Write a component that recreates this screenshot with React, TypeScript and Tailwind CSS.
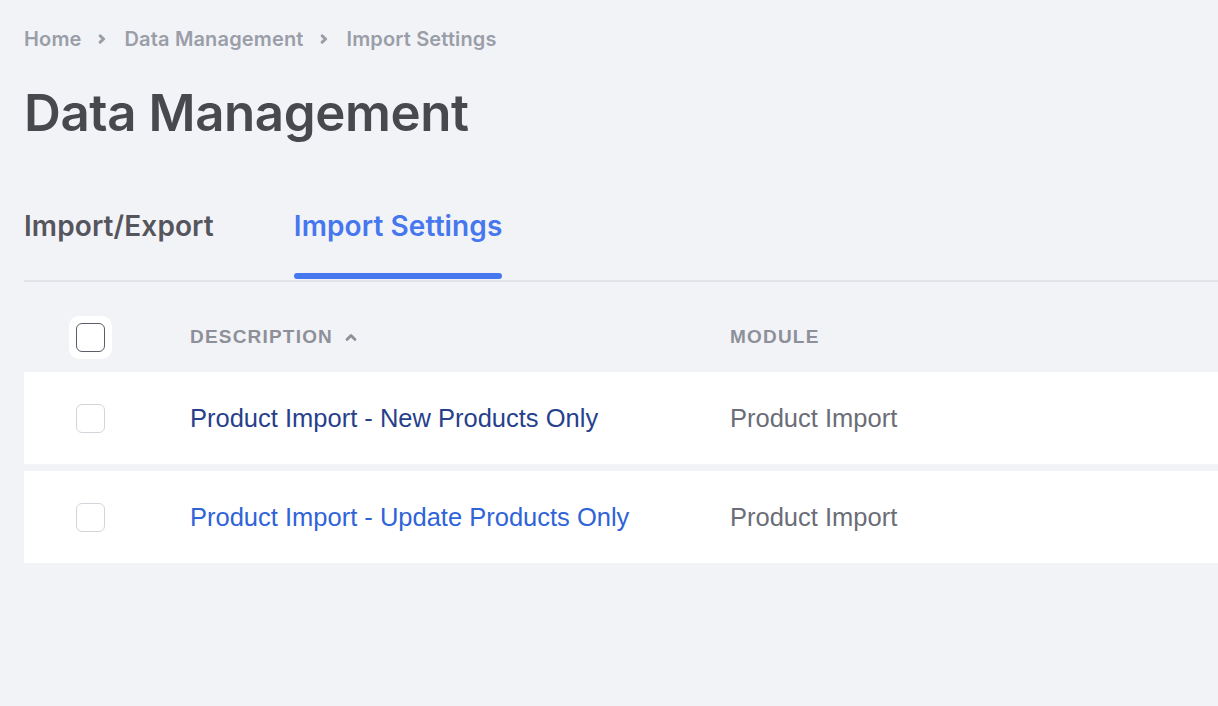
import React, { useState } from "react";

const rows = [
  { id: 1, description: "Product Import - New Products Only", module: "Product Import", visited: true },
  { id: 2, description: "Product Import - Update Products Only", module: "Product Import", visited: false },
];

const Chevron = () => (
  <svg width="10" height="10" viewBox="0 0 10 10" className="ml-[15px] mr-[18px]">
    <path d="M3.2 1.8 L6.6 5 L3.2 8.2" fill="none" stroke="#9a9ea8" strokeWidth="3" strokeLinecap="round" strokeLinejoin="round" />
  </svg>
);

const App = () => {
  const [checked, setChecked] = useState<number[]>([]);
  const toggle = (id: number) =>
    setChecked((c) => (c.includes(id) ? c.filter((x) => x !== id) : [...c, id]));

  return (
    <div className="min-h-[706px] w-full overflow-hidden bg-[#f2f3f7] pl-6 font-['Inter',sans-serif]">
      {/* breadcrumb */}
      <nav className="flex h-[78px] items-center text-[20px] font-semibold tracking-[0.15px] text-[#9a9ea8]">
        <span>Home</span>
        <Chevron />
        <span>Data Management</span>
        <Chevron />
        <span>Import Settings</span>
      </nav>

      <h1 className="text-[51px] font-semibold leading-[70px] tracking-[-0.4px] text-[#48494f]">
        Data Management
      </h1>

      {/* tabs */}
      <div className="mt-[60px] flex border-b-2 border-[#e2e3e9]">
        <button className="mr-[80px] pb-[36px] text-[28px] font-semibold leading-[36px] tracking-[0.1px] text-[#55565d]">
          Import/Export
        </button>
        <button className="relative pb-[36px] text-[28px] font-semibold leading-[36px] tracking-[0.1px] text-[#4677ee]">
          Import Settings
          <span className="absolute bottom-[1px] left-0 right-0 h-[6px] rounded-full bg-[#4677ee]" />
        </button>
      </div>

      {/* table */}
      <div className="w-[1400px] font-['Liberation_Sans',sans-serif]">
        <div className="flex h-[90px] items-center pt-[20px]">
          <div className="flex w-[166px] items-center pl-[45px]">
            <span className="flex h-[43px] w-[43px] items-center justify-center rounded-[10px] bg-white">
              <span className="h-[29px] w-[29px] rounded-[6px] border border-[#5c5e66] bg-white" />
            </span>
          </div>
          <div className="flex w-[540px] items-center text-[19px] font-bold uppercase tracking-[1.2px] text-[#8e9099]">
            Description
            <svg width="14" height="10" viewBox="0 0 14 10" className="ml-[11px]">
              <path d="M3 7.5 L7 3.5 L11 7.5" fill="none" stroke="#8e9099" strokeWidth="2.8" strokeLinecap="round" strokeLinejoin="round" />
            </svg>
          </div>
          <div className="text-[19px] font-bold uppercase tracking-[1.2px] text-[#8e9099]">Module</div>
        </div>

        <div className="flex flex-col gap-[7px]">
          {rows.map((r) => (
            <div key={r.id} className="flex h-[92px] items-center bg-white">
              <div className="flex w-[166px] items-center pl-[52px]">
                <button
                  onClick={() => toggle(r.id)}
                  className={`h-[29px] w-[29px] rounded-[6px] border ${
                    checked.includes(r.id) ? "border-[#4677ee] bg-[#4677ee]" : "border-[#d3d5db] bg-white"
                  }`}
                />
              </div>
              <a
                href="#"
                className={`w-[540px] text-[25.5px] ${r.visited ? "text-[#283f8c]" : "text-[#2f63d8]"}`}
              >
                {r.description}
              </a>
              <div className="text-[25.5px] text-[#6b6d77]">{r.module}</div>
            </div>
          ))}
        </div>
      </div>
    </div>
  );
};

export default App;
